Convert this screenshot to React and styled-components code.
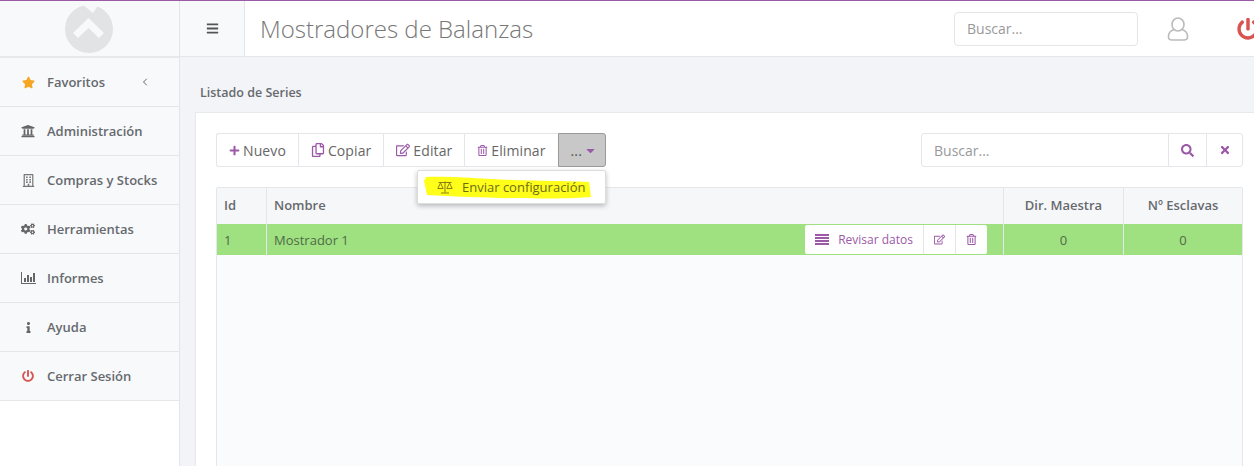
import React from "react";
import styled, { createGlobalStyle } from "styled-components";
import {
  FaStar,
  FaUniversity,
  FaRegBuilding,
  FaCogs,
  FaInfo,
  FaPowerOff,
  FaBars,
  FaPlus,
  FaRegCopy,
  FaRegEdit,
  FaRegTrashAlt,
  FaSearch,
  FaTimes,
  FaCaretDown,
} from "react-icons/fa";
import { FiChevronLeft } from "react-icons/fi";

const GlobalStyle = createGlobalStyle`
  html, body {
    margin: 0;
    height: 100%;
    overflow: hidden;
    font-family: "Open Sans", "Liberation Sans", sans-serif;
    background: #f3f4f8;
  }
  * { box-sizing: border-box; }
`;

const purple = "#9b59a8";

const ChartIcon = () => (
  <svg width="15" height="12" viewBox="0 0 15 12" fill="currentColor">
    <rect x="0" y="0" width="1" height="12" />
    <rect x="0" y="11" width="15" height="1" />
    <rect x="3" y="6" width="2" height="4" />
    <rect x="6" y="3" width="2" height="7" />
    <rect x="9" y="5" width="2" height="5" />
    <rect x="12" y="1" width="2" height="9" />
  </svg>
);

const ScaleIcon = () => (
  <svg width="16" height="13" viewBox="0 0 16 13" fill="none" stroke="currentColor" strokeWidth="1">
    <path d="M1.5 1.5 H14.5 M8 0.5 V11.5 M4 12 H12" />
    <path d="M3.5 2 L0.8 7.5 H6.2 Z M12.5 2 L9.8 7.5 H15.2 Z" />
  </svg>
);

const ListIcon = () => (
  <svg width="14" height="11" viewBox="0 0 14 11" fill="currentColor">
    <rect x="0" y="0" width="14" height="2" />
    <rect x="0" y="3" width="14" height="2" />
    <rect x="0" y="6" width="14" height="2" />
    <rect x="0" y="9" width="14" height="2" />
  </svg>
);

const menu = [
  { label: "Favoritos", icon: <FaStar size={13} />, color: "#f5a623", arrow: true },
  { label: "Administración", icon: <FaUniversity size={14} />, color: "#666" },
  { label: "Compras y Stocks", icon: <FaRegBuilding size={13} />, color: "#777" },
  { label: "Herramientas", icon: <FaCogs size={14} />, color: "#666" },
  { label: "Informes", icon: <ChartIcon />, color: "#666" },
  { label: "Ayuda", icon: <FaInfo size={11} />, color: "#666" },
  { label: "Cerrar Sesión", icon: <FaPowerOff size={12} />, color: "#d9534f" },
];

function App() {
  return (
    <Page>
      <GlobalStyle />
      <Sidebar>
        <LogoBox>
          <svg width="48" height="48" viewBox="0 0 48 48">
            <circle cx="24" cy="24" r="24" fill="#e2e3e4" />
            <path d="M17 -1 L28 8 L34 -1 Z" fill="#f8f9fb" />
            <path d="M23.5 13 L39 28 L34 33 L23.5 23 L13 33 L8 28 Z" fill="#f8f9fb" />
          </svg>
        </LogoBox>
        {menu.map((item) => (
          <MenuItem key={item.label}>
            <MenuIcon $color={item.color}>{item.icon}</MenuIcon>
            <MenuLabel>{item.label}</MenuLabel>
            {item.arrow && (
              <MenuArrow>
                <FiChevronLeft size={12} />
              </MenuArrow>
            )}
          </MenuItem>
        ))}
      </Sidebar>
      <Main>
        <Header>
          <Burger>
            <FaBars size={13} />
          </Burger>
          <PageTitle>Mostradores de Balanzas</PageTitle>
          <HeaderSearch placeholder="Buscar..." />
          <UserButton>
            <svg width="22" height="24" viewBox="0 0 22 24" fill="none" stroke="#bbb" strokeWidth="1.6">
              <ellipse cx="11" cy="7.5" rx="6" ry="6.5" />
              <path d="M7 12.5 C3 14 1.5 16 1.5 19 V20 C1.5 22 3 23 5 23 H17 C19 23 20.5 22 20.5 20 V19 C20.5 16 19 14 15 12.5" />
            </svg>
          </UserButton>
          <PowerButton>
            <FaPowerOff size={22} />
          </PowerButton>
        </Header>
        <Breadcrumb>Listado de Series</Breadcrumb>
        <Panel>
          <Toolbar>
            <ButtonGroup>
              <ToolButton>
                <FaPlus size={11} />
                Nuevo
              </ToolButton>
              <ToolButton>
                <FaRegCopy size={14} />
                Copiar
              </ToolButton>
              <ToolButton>
                <FaRegEdit size={14} />
                Editar
              </ToolButton>
              <ToolButton>
                <FaRegTrashAlt size={11} />
                Eliminar
              </ToolButton>
              <MoreButton>
                ...
                <FaCaretDown size={13} />
              </MoreButton>
              <Dropdown>
                <Highlight viewBox="0 0 169 24">
                  <path d="M3 1 C30 0 60 3 90 4 C120 5 150 5 166 6 L168 21 C130 24 60 22 4 19 L1 5 Z" fill="#ffff1a" />
                </Highlight>
                <DropdownItem>
                  <ScaleIcon />
                  Enviar configuración
                </DropdownItem>
              </Dropdown>
            </ButtonGroup>
            <SearchGroup>
              <SearchInput placeholder="Buscar..." />
              <SearchButton $w={38}>
                <FaSearch size={13} />
              </SearchButton>
              <SearchButton $w={36}>
                <FaTimes size={12} />
              </SearchButton>
            </SearchGroup>
          </Toolbar>
          <TableBox>
            <HeadRow>
              <IdCell>Id</IdCell>
              <NameCell>Nombre</NameCell>
              <NumCell $w={120}>Dir. Maestra</NumCell>
              <NumCell $w={119}>Nº Esclavas</NumCell>
            </HeadRow>
            <DataRow>
              <IdCell>1</IdCell>
              <NameCell>
                Mostrador 1
                <RowActions>
                  <RowAction>
                    <ListIcon />
                    Revisar datos
                  </RowAction>
                  <RowAction>
                    <FaRegEdit size={11} />
                  </RowAction>
                  <RowAction>
                    <FaRegTrashAlt size={11} />
                  </RowAction>
                </RowActions>
              </NameCell>
              <NumCell $w={120}>0</NumCell>
              <NumCell $w={119}>0</NumCell>
            </DataRow>
          </TableBox>
        </Panel>
      </Main>
    </Page>
  );
}

const Page = styled.div`
  display: flex;
  width: 1254px;
  height: 466px;
  overflow: hidden;
  border-top: 1px solid ${purple};
`;

const Sidebar = styled.aside`
  flex: 0 0 180px;
  min-width: 0;
  background: #fff;
  border-right: 1px solid #e3e5ea;
`;

const LogoBox = styled.div`
  display: flex;
  justify-content: center;
  align-items: flex-start;
  height: 57px;
  padding: 4px 1px 0 0;
  background: #f8f9fb;
  border-bottom: 2px solid #e7e8ec;
`;

const MenuItem = styled.div`
  display: flex;
  align-items: center;
  height: 49px;
  padding-left: 19px;
  background: #f8f9fb;
  border-bottom: 1px solid #e4e6ea;
`;

const MenuIcon = styled.span`
  display: flex;
  justify-content: center;
  width: 18px;
  margin-right: 10px;
  color: ${(props) => props.$color};
`;

const MenuLabel = styled.span`
  font-size: 13px;
  font-weight: 600;
  color: #666a6e;
  white-space: nowrap;
`;

const MenuArrow = styled.span`
  display: flex;
  margin-left: auto;
  margin-right: 28px;
  color: #666;
`;

const Main = styled.main`
  flex: 1;
  min-width: 0;
  display: flex;
  flex-direction: column;
`;

const Header = styled.header`
  flex: 0 0 56px;
  display: flex;
  align-items: center;
  background: #fff;
  border-bottom: 1px solid #e5e6ea;
`;

const Burger = styled.div`
  display: flex;
  justify-content: center;
  align-items: center;
  width: 65px;
  height: 100%;
  background: #f8f9fb;
  border-right: 1px solid #e5e6ea;
  color: #555;
`;

const PageTitle = styled.h1`
  margin: 0 0 0 15px;
  font-size: 24px;
  font-weight: 300;
  color: #777;
  white-space: nowrap;
`;

const HeaderSearch = styled.input`
  width: 184px;
  height: 34px;
  margin-left: auto;
  padding: 0 12px;
  font: 400 14px "Open Sans", sans-serif;
  background: #fff;
  border: 1px solid #e3e5e8;
  border-radius: 4px;
  &::placeholder {
    color: #999;
  }
`;

const UserButton = styled.div`
  display: flex;
  margin-left: 29px;
`;

const PowerButton = styled.div`
  flex: 0 0 auto;
  display: flex;
  margin-left: 48px;
  margin-right: -5px;
  color: #d9534f;
`;

const Breadcrumb = styled.div`
  flex: 0 0 55px;
  padding: 27px 0 0 20px;
  font-size: 12.5px;
  font-weight: 600;
  color: #666a6e;
  background: #f3f4f8;
`;

const Panel = styled.section`
  flex: 1;
  margin-left: 15px;
  padding: 20px 11px 0 20px;
  background: #fff;
  border-top: 1px solid #e8e9ed;
  border-left: 1px solid #e8e9ed;
`;

const Toolbar = styled.div`
  display: flex;
  justify-content: space-between;
  height: 34px;
  margin-bottom: 20px;
`;

const ButtonGroup = styled.div`
  position: relative;
  display: flex;
`;

const ToolButton = styled.div`
  display: flex;
  align-items: center;
  gap: 3px;
  padding: 0 12px;
  font-size: 14px;
  letter-spacing: 0.1px;
  color: #666;
  background: #fff;
  border: 1px solid #e5e6ea;
  border-right: 0;
  svg {
    color: ${purple};
  }
  &:first-child {
    border-radius: 3px 0 0 3px;
  }
`;

const MoreButton = styled(ToolButton)`
  padding: 0 8px 0 12px;
  gap: 2px;
  color: #555;
  background: #c8c8c8;
  border: 1px solid #9a9a9a;
  border-radius: 0 3px 3px 0;
`;

const Dropdown = styled.div`
  position: absolute;
  top: 37px;
  left: 201px;
  width: 189px;
  height: 34px;
  background: #fff;
  border: 1px solid #ddd;
  border-radius: 2px;
  box-shadow: 0 2px 5px rgba(0, 0, 0, 0.25);
`;

const Highlight = styled.svg`
  position: absolute;
  top: 5px;
  left: 5px;
  width: 169px;
  height: 24px;
`;

const DropdownItem = styled.div`
  position: relative;
  display: flex;
  align-items: center;
  gap: 9px;
  height: 32px;
  padding-left: 19px;
  font-size: 13px;
  color: #6d6b1a;
  svg {
    color: #8a7f10;
  }
`;

const SearchGroup = styled.div`
  display: flex;
  width: 322px;
  border: 1px solid #e5e6ea;
  border-radius: 3px;
  background: #fff;
`;

const SearchInput = styled.input`
  flex: 1;
  min-width: 0;
  padding: 0 12px;
  border: 0;
  background: transparent;
  font: 400 14px "Open Sans", sans-serif;
  &::placeholder {
    color: #999;
  }
`;

const SearchButton = styled.div`
  flex: 0 0 ${(props) => props.$w}px;
  display: flex;
  justify-content: center;
  align-items: center;
  border-left: 1px solid #e5e6ea;
  color: ${purple};
`;

const TableBox = styled.div`
  height: 300px;
  background: #fafbfc;
  border: 1px solid #e5e6ea;
  border-radius: 2px 2px 0 0;
`;

const HeadRow = styled.div`
  display: flex;
  height: 36px;
  background: #f6f7f9;
  font-size: 13px;
  font-weight: 600;
  color: #666a6e;
  & > div {
    padding-bottom: 2px;
  }
`;

const DataRow = styled.div`
  display: flex;
  height: 31px;
  background: #9fe080;
  font-size: 13px;
  color: #4f6b47;
`;

const IdCell = styled.div`
  flex: 0 0 50px;
  display: flex;
  align-items: center;
  padding-left: 7px;
  border-right: 1px solid #e5e6ea;
`;

const NameCell = styled.div`
  flex: 1;
  display: flex;
  align-items: center;
  justify-content: space-between;
  padding: 0 16px 0 7px;
`;

const NumCell = styled.div`
  flex: 0 0 ${(props) => props.$w}px;
  display: flex;
  justify-content: center;
  align-items: center;
  border-left: 1px solid #e5e6ea;
`;

const RowActions = styled.div`
  display: flex;
  height: 29px;
  background: #fff;
  border-radius: 2px;
`;

const RowAction = styled.div`
  display: flex;
  align-items: center;
  justify-content: center;
  gap: 9px;
  padding: 0 10px;
  font-size: 12px;
  color: ${purple};
  & + & {
    border-left: 1px solid #e5e6ea;
  }
`;

export default App;
